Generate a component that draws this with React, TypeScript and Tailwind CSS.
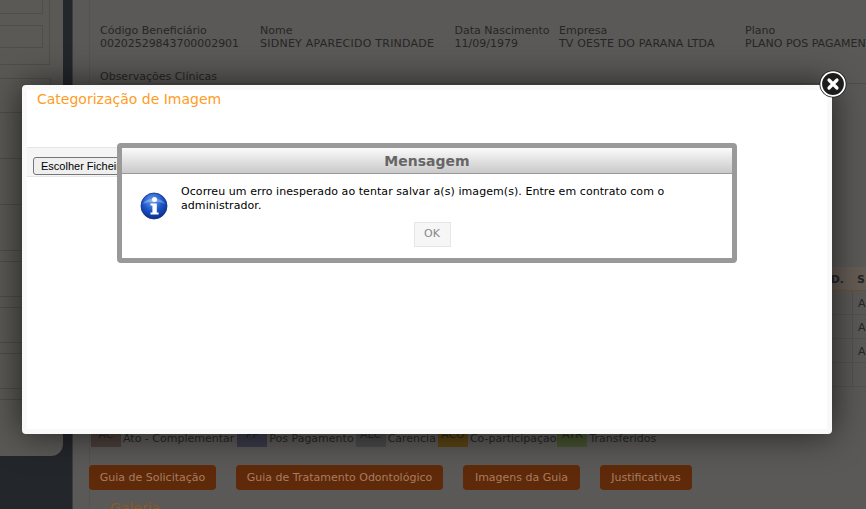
import React from 'react';

const FONT = "font-['DejaVu_Sans','Liberation_Sans',sans-serif]";

const beneficiario = [
  { label: 'Código Beneficiário', value: '00202529843700002901', width: 'w-[160px]', track: 'tracking-[-0.05px]' },
  { label: 'Nome', value: 'SIDNEY APARECIDO TRINDADE', width: 'w-[194.5px]', track: 'tracking-[0.24px]' },
  { label: 'Data Nascimento', value: '11/09/1979', width: 'w-[104.5px]', track: 'tracking-normal' },
  { label: 'Empresa', value: 'TV OESTE DO PARANA LTDA', width: 'w-[186px]', track: 'tracking-[0.13px]' },
  { label: 'Plano', value: 'PLANO POS PAGAMENTO', width: 'w-[200px]', track: 'tracking-normal' },
];

const legenda = [
  { sigla: 'AC', nome: 'Ato - Complementar', cor: 'bg-[#4a3e3a]', ml: 'ml-0' },
  { sigla: 'PP', nome: 'Pos Pagamento', cor: 'bg-[#3b3a4b]', ml: 'ml-[2px]' },
  { sigla: 'ALC', nome: 'Carencia', cor: 'bg-[#4b4a4a]', ml: 'ml-px' },
  { sigla: 'ACO', nome: 'Co-participaçao', cor: 'bg-[#5a4413]', ml: 'ml-px' },
  { sigla: 'ATR', nome: 'Transferidos', cor: 'bg-[#46522f]', ml: 'ml-0' },
];

const botoes = [
  { texto: 'Guia de Solicitação', largura: 'w-[127px]' },
  { texto: 'Guia de Tratamento Odontológico', largura: 'w-[207px]' },
  { texto: 'Imagens da Guia', largura: 'w-[117px]' },
  { texto: 'Justificativas', largura: 'w-[92px]' },
];

const InfoIcon = () => (
  <svg width="28" height="28" viewBox="0 0 28 28">
    <defs>
      <radialGradient id="infoBg" cx="45%" cy="30%" r="70%">
        <stop offset="0%" stopColor="#6fa3f0" />
        <stop offset="55%" stopColor="#1c55c8" />
        <stop offset="100%" stopColor="#0b2f8a" />
      </radialGradient>
    </defs>
    <circle cx="14" cy="14" r="13" fill="url(#infoBg)" stroke="#0f2f80" strokeWidth="0.8" />
    <path d="M3 12 C6 5 22 5 25 12 C19 9 9 9 3 12Z" fill="#ffffff" opacity="0.28" />
    <circle cx="14.5" cy="7.6" r="2.5" fill="#ffffff" />
    <path d="M10.5 11.5 H16.8 V20.6 H18.6 V22.6 H10.5 V20.6 H12.4 V13.5 H10.5Z" fill="#ffffff" />
  </svg>
);

const CloseIcon = () => (
  <svg width="30" height="30" viewBox="0 0 30 30">
    <circle cx="15" cy="15" r="13.5" fill="#1c1c1c" />
    <circle cx="15" cy="15" r="11.8" fill="#1c1c1c" stroke="#ffffff" strokeWidth="1.8" />
    <path d="M11 11 L19 19 M19 11 L11 19" stroke="#ffffff" strokeWidth="3.2" strokeLinecap="round" />
  </svg>
);

const Sidebar = () => (
  <div className="w-[73px] shrink-0 bg-[#23262b] border-r border-[#3c3d3e]">
    <div className="w-[63px] h-[456px] bg-[#5a5956] rounded-br-xl overflow-hidden">
      <div className="h-[65px] w-[50px] border-r border-b border-[#4f4e4c]">
        <div className="h-[14px] w-[43px] border-r border-b border-[#4f4e4c]" />
        <div className="h-[23px] w-[43px] mt-[11px] border border-l-0 border-[#4f4e4c]" />
      </div>
      <div className="h-[34px] mt-[13px] w-[51px] border-r border-t border-[#4f4e4c]" />
      {[0, 1].map((i) => (
        <div key={i} className="h-[46px] border-t border-[#4d4c4a]" />
      ))}
      {[0, 1, 2, 3, 4].map((i) => (
        <div key={i} className="h-[46px] border-t border-[#4d4c4a]">
          {i > 0 && <div className="h-[11px] border-b border-[#4d4c4a]" />}
        </div>
      ))}
    </div>
  </div>
);

const PaginaFundo = () => (
  <div className="flex-1 min-w-0 overflow-hidden pl-[16px] bg-[#5a5957] text-[#262626] text-[11px] leading-[13px]">
    <div className="h-[509px] border-l border-[#545351] pl-[10px]">
      <div className="flex pt-[24px] w-[900px]">
        {beneficiario.map((b) => (
          <div key={b.label} className={`${b.width} shrink-0 whitespace-nowrap`}>
            <div>{b.label}</div>
            <div className={b.track}>{b.value}</div>
          </div>
        ))}
      </div>
      <div className="mt-[20px]">Observações Clínicas</div>
      <div className="h-[184px] border-t border-[#4e4d4b]" />

      <div className="w-[900px] ml-[-10px]">
        <div className="h-[24px] bg-[#655c55] border-b border-[#6e4f35] flex font-bold">
          <div className="w-[760px] pt-[6px] text-right pr-[6px]">D.</div>
          <div className="pt-[6px] pl-[7px]">S</div>
        </div>
        {[0, 1, 2, 3].map((i) => (
          <div key={i} className="h-[24px] border-b border-[#525150] flex">
            <div className="w-[763px] border-r border-[#525150]" />
            <div className="pt-[6px] pl-[5px]">{i < 3 ? 'A' : ''}</div>
          </div>
        ))}
      </div>

      <div className="flex items-end h-[60px] ml-[-9px]">
        {legenda.map((l) => (
          <div key={l.sigla} className={`flex items-end ${l.ml}`}>
            <div className={`w-[30px] h-[29px] pt-[10px] text-center ${l.cor}`}>{l.sigla}</div>
            <div className="pl-[2px] pr-[1px] pb-[2px] whitespace-nowrap">{l.nome}</div>
          </div>
        ))}
      </div>

      <div className="flex gap-[20px] mt-[18px] ml-[-11px]">
        {botoes.map((b) => (
          <div key={b.texto} className={`${b.largura} h-[25px] text-center leading-[25px] rounded bg-[#5e2a0a] text-[#ab7b5d] whitespace-nowrap`}>
            {b.texto}
          </div>
        ))}
      </div>
      <div className="mt-[12px] ml-[10px] text-[14px] text-[#8b5a22]">Galeria</div>
    </div>
  </div>
);

const ModalImagem = () => (
  <div className="absolute left-[22px] top-[85px] w-[810px] h-[349px] rounded bg-white border-[5px] border-[#f9f9f9] shadow-[0_0_35px_rgba(0,0,0,0.65)]">
    <div className="pl-[10px] pt-[1px] text-[14px] leading-[17px] text-[#ff9c1e]">Categorização de Imagem</div>
    <div className="mt-[39px] w-[300px] h-[30px] bg-[#f5f5f5] border-y border-[#e6e6e6] pl-[6px] pt-[5px]">
      <button className="w-[110px] h-[18px] text-left pl-[7px] bg-[#efefef] border border-[#767676] rounded-[3px] text-[11px] leading-[16px] text-black font-['Liberation_Sans',sans-serif] overflow-hidden whitespace-nowrap">
        Escolher Ficheiro
      </button>
    </div>
  </div>
);

const DialogMensagem = () => (
  <div className="absolute left-[117px] top-[143px] w-[620px] h-[120px] rounded bg-white border-[5px] border-[#999999]">
    <div className="h-[26px] bg-gradient-to-b from-[#fbfbfb] to-[#c9c9c9] border-b border-[#999999] text-center text-[14px] font-bold leading-[26px] text-[#666666]">
      Mensagem
    </div>
    <div className="flex pl-[18px] pt-[11px]">
      <div className="w-[41px] shrink-0 pt-[7px]">
        <InfoIcon />
      </div>
      <p className="w-[500px] tracking-[0.065px] text-[11px] leading-[14px] text-black">
        Ocorreu um erro inesperado ao tentar salvar a(s) imagem(s). Entre em contrato com o administrador.
      </p>
    </div>
    <div className="flex justify-center mt-[2px] pl-[10px]">
      <button className="w-[37px] h-[25px] bg-[#f6f6f6] border border-[#e6e6e6] text-[11px] text-[#888888]">OK</button>
    </div>
  </div>
);

export default function App() {
  return (
    <div className={`relative w-[866px] h-[509px] overflow-hidden flex ${FONT}`}>
      <Sidebar />
      <PaginaFundo />
      <ModalImagem />
      <DialogMensagem />
      <div className="absolute left-[818px] top-[69px]">
        <CloseIcon />
      </div>
    </div>
  );
}
